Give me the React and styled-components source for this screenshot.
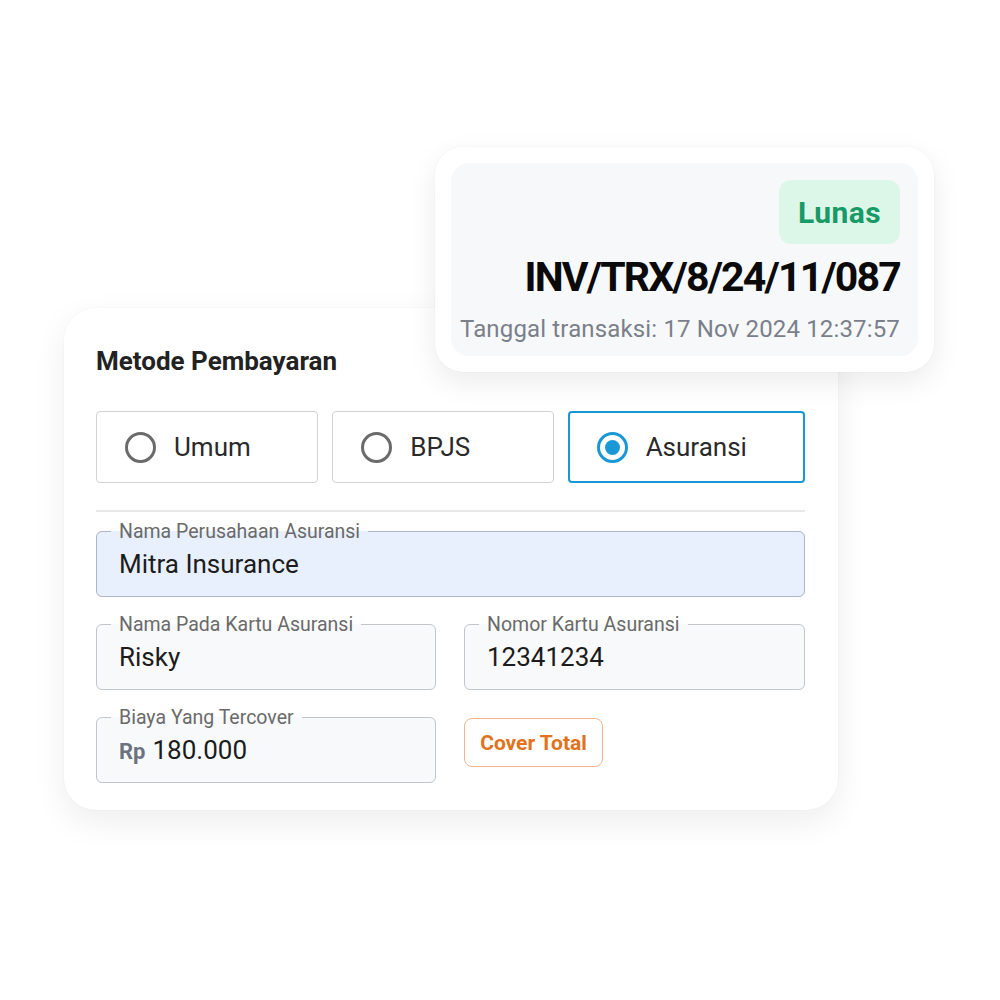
import React from "react";
import styled, { createGlobalStyle } from "styled-components";

const Global = createGlobalStyle`
  html, body { margin: 0; padding: 0; background: #ffffff; }
  body { font-family: Roboto, "Noto Sans", "Liberation Sans", sans-serif; color: #1f1f1f; }
  * { box-sizing: border-box; }
`;

const Stage = styled.div`
  position: relative;
  width: 1000px;
  height: 1000px;
  padding: 308px 0 0 64px;
  background: #ffffff;
`;

const Card = styled.div`
  width: 774px;
  background: #ffffff;
  border-radius: 32px;
  padding: 39px 33px 27px 32px;
  box-shadow: 0 12px 34px rgba(0, 0, 0, 0.07), 0 0 2px rgba(0, 0, 0, 0.05);
`;

const Title = styled.h2`
  margin: 0;
  font-size: 26px;
  line-height: 28px;
  font-weight: 700;
  color: #222222;
`;

const Options = styled.div`
  display: grid;
  grid-template-columns: 222fr 221fr 237fr;
  gap: 14px;
  margin-top: 36px;
`;

const Option = styled.div`
  height: 72px;
  display: flex;
  align-items: center;
  gap: 18px;
  padding-left: ${(p) => (p.$active ? "27px" : "28px")};
  border: ${(p) => (p.$active ? "2px solid #1a98d5" : "1px solid #d3d3d3")};
  border-radius: 4px;
  font-size: 26px;
  color: #2a2a2a;
  background: #ffffff;
`;

const Radio = styled.span`
  width: 31px;
  height: 31px;
  border-radius: 50%;
  border: 3px solid ${(p) => (p.$active ? "#1a98d5" : "#6b6b6b")};
  display: flex;
  align-items: center;
  justify-content: center;
  flex: none;
  &::after {
    content: "";
    width: 15px;
    height: 15px;
    border-radius: 50%;
    background: ${(p) => (p.$active ? "#1a98d5" : "transparent")};
  }
`;

const Divider = styled.hr`
  border: none;
  border-top: 2px solid #e8e9eb;
  margin: 27px 0 9px;
`;

const Fields = styled.div`
  display: flex;
  flex-direction: column;
  gap: 17px;
`;

const Row = styled.div`
  display: grid;
  grid-template-columns: 340px 341px;
  gap: 28px;
  align-items: start;
`;

const Field = styled.fieldset`
  margin: 0;
  min-width: 0;
  padding: 0 22px;
  border: 1px solid ${(p) => (p.$blue ? "#aeb6c2" : "#c2c5ca")};
  border-radius: 6px;
  background: ${(p) => (p.$blue ? "#e8f0fe" : "#f8f9fb")};
`;

const Legend = styled.legend`
  margin-left: -8px;
  padding: 0 8px;
  font-size: 19.5px;
  line-height: 21px;
  color: #6a6a6a;
`;

const Value = styled.div`
  height: 54px;
  font-size: 26px;
  line-height: 28px;
  padding-top: 8px;
  color: #1c1c1c;
  display: flex;
  align-items: baseline;
  gap: 7px;
`;

const Prefix = styled.span`
  font-size: 22px;
  line-height: 28px;
  font-weight: 700;
  color: #6b7280;
`;

const CoverButton = styled.button`
  justify-self: start;
  margin-top: 11px;
  width: 139px;
  height: 49px;
  border: 1px solid #f3b58d;
  border-radius: 8px;
  background: #ffffff;
  color: #e2721c;
  font-family: Roboto, "Noto Sans", sans-serif;
  font-size: 21px;
  font-weight: 700;
  padding: 0;
`;

const Invoice = styled.div`
  position: absolute;
  left: 435px;
  top: 147px;
  width: 499px;
  padding: 16px;
  background: #ffffff;
  border-radius: 28px;
  box-shadow: 0 10px 30px rgba(0, 0, 0, 0.08), 0 0 2px rgba(0, 0, 0, 0.05);
`;

const InvoiceInner = styled.div`
  background: #f7f8fa;
  border-radius: 18px;
  padding: 17px 18px 13px 10px;
  display: flex;
  flex-direction: column;
  align-items: flex-end;
`;

const Badge = styled.div`
  height: 64px;
  width: 121px;
  border-radius: 12px;
  background: #dcf6e8;
  color: #179a66;
  font-size: 30px;
  letter-spacing: 0.4px;
  font-weight: 700;
  display: flex;
  align-items: center;
  justify-content: center;
`;

const InvoiceNo = styled.div`
  margin-top: 9px;
  font-size: 41px;
  line-height: 48px;
  font-weight: 700;
  color: #0a0a0a;
  letter-spacing: -1.8px;
`;

const DateText = styled.div`
  margin-top: 14px;
  font-size: 24px;
  line-height: 28px;
  letter-spacing: 0.15px;
  white-space: nowrap;
  color: #7a808a;
`;

const options = [
  { label: "Umum", active: false },
  { label: "BPJS", active: false },
  { label: "Asuransi", active: true },
];

export default function App() {
  return (
    <>
      <Global />
      <Stage>
        <Card>
          <Title>Metode Pembayaran</Title>
          <Options>
            {options.map((o) => (
              <Option key={o.label} $active={o.active}>
                <Radio $active={o.active} />
                {o.label}
              </Option>
            ))}
          </Options>
          <Divider />
          <Fields>
            <Field $blue>
              <Legend>Nama Perusahaan Asuransi</Legend>
              <Value>Mitra Insurance</Value>
            </Field>
            <Row>
              <Field>
                <Legend>Nama Pada Kartu Asuransi</Legend>
                <Value>Risky</Value>
              </Field>
              <Field>
                <Legend>Nomor Kartu Asuransi</Legend>
                <Value>12341234</Value>
              </Field>
            </Row>
            <Row>
              <Field>
                <Legend>Biaya Yang Tercover</Legend>
                <Value>
                  <Prefix>Rp</Prefix>180.000
                </Value>
              </Field>
              <CoverButton>Cover Total</CoverButton>
            </Row>
          </Fields>
        </Card>
        <Invoice>
          <InvoiceInner>
            <Badge>Lunas</Badge>
            <InvoiceNo>INV/TRX/8/24/11/087</InvoiceNo>
            <DateText>Tanggal transaksi: 17 Nov 2024 12:37:57</DateText>
          </InvoiceInner>
        </Invoice>
      </Stage>
    </>
  );
}
